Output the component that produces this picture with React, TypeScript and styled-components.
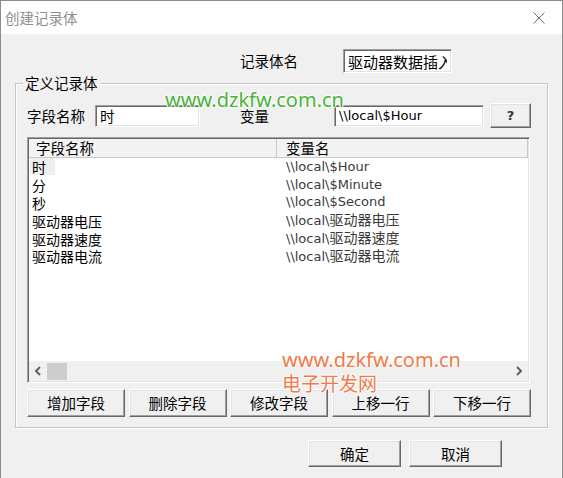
import styled, { createGlobalStyle } from 'styled-components';

const UI_FONT = `"Noto Sans CJK SC", "Noto Sans", sans-serif`;
const LATIN_FONT = `"DejaVu Sans", "Noto Sans CJK SC", sans-serif`;

const GlobalStyle = createGlobalStyle`
  html, body {
    margin: 0;
    padding: 0;
    background: #fff;
  }
  body {
    font-family: ${UI_FONT};
  }
  * {
    box-sizing: border-box;
  }
`;

const Window = styled.div`
  position: relative;
  width: 563px;
  height: 478px;
  display: flex;
  flex-direction: column;
  background: #f0f0f0;
  border: 1px solid #8c8c8c;
  border-bottom: none;
  overflow: hidden;
  color: #000;
`;

const TitleBar = styled.div`
  height: 33px;
  flex: none;
  display: flex;
  align-items: center;
  justify-content: space-between;
  padding-left: 4px;
  background: #fff;
`;

const Title = styled.span`
  font-size: 14.5px;
  line-height: 20px;
  color: #8f8f8f;
`;

const CloseBox = styled.div`
  width: 46px;
  height: 33px;
  display: flex;
  align-items: center;
  justify-content: center;
`;

const Body = styled.div`
  display: flex;
  flex-direction: column;
  padding: 0 14px;
`;

const NameRow = styled.div`
  display: flex;
  align-items: center;
  margin-top: 15px;
  padding-left: 225px;
`;

const Label = styled.span<{ $width: number; $gap?: number; $lead?: number }>`
  flex: none;
  width: ${(p) => p.$width}px;
  margin-left: ${(p) => p.$lead ?? 0}px;
  margin-right: ${(p) => p.$gap ?? 0}px;
  font-size: 14.5px;
  line-height: 16px;
  white-space: nowrap;
`;

const TextBox = styled.input<{ $width: number; $height: number; $latin?: boolean; $size?: number }>`
  flex: none;
  width: ${(p) => p.$width}px;
  height: ${(p) => p.$height}px;
  margin: 0;
  padding: 0 4px;
  background: #fff;
  border: 1px solid;
  border-color: #a0a0a0 #fff #fff #a0a0a0;
  box-shadow: inset 1px 1px 0 #696969, inset -1px -1px 0 #e3e3e3;
  font-family: ${(p) => (p.$latin ? LATIN_FONT : UI_FONT)};
  font-size: ${(p) => p.$size ?? (p.$latin ? 13 : 14.5)}px;
  color: #000;
  outline: none;
`;

const GroupBox = styled.fieldset`
  margin: 0;
  min-width: 0;
  padding: 10px 14px 10px 11px;
  border: 1px solid #c4c4c4;
  box-shadow: 1px 1px 0 #fff, inset 1px 1px 0 #fff;
`;

const Legend = styled.legend`
  margin-left: -4px;
  padding: 0 2px;
  font-size: 14.5px;
  line-height: 20px;
`;

const FieldRow = styled.div`
  display: flex;
  align-items: center;
  height: 25px;
`;

const Button = styled.button<{ $width: number; $height: number }>`
  flex: none;
  width: ${(p) => p.$width}px;
  height: ${(p) => p.$height}px;
  margin: 0;
  padding: 0;
  background: #f0f0f0;
  border: 1px solid;
  border-color: #fff #696969 #696969 #fff;
  box-shadow: inset -1px -1px 0 #a0a0a0, inset 1px 1px 0 #e3e3e3;
  font-family: ${UI_FONT};
  font-size: 14.5px;
  line-height: 20px;
  color: #000;
`;

const HelpButton = styled(Button)`
  margin-left: 6px;
  font-family: ${LATIN_FONT};
  font-size: 13px;
  font-weight: bold;
  color: #333;
`;

const ListView = styled.div`
  display: flex;
  flex-direction: column;
  width: 503px;
  height: 246px;
  margin-top: 9px;
  background: #fff;
  border: 1px solid;
  border-color: #a0a0a0 #fff #fff #a0a0a0;
  box-shadow: inset 1px 1px 0 #696969, inset -1px -1px 0 #e3e3e3;
  padding: 1px;
  overflow: hidden;
`;

const ListHeader = styled.div`
  flex: none;
  display: grid;
  grid-template-columns: 248px 1fr;
  height: 19px;
  background: #f3f3f3;
  border-bottom: 1px solid #c8c8c8;
`;

const HeaderCell = styled.div<{ $pad: number }>`
  padding-left: ${(p) => p.$pad}px;
  font-size: 14.5px;
  line-height: 18px;
  border-right: 1px solid #c8c8c8;
  white-space: nowrap;
`;

const Rows = styled.div`
  flex: 1;
  background: #fff;
`;

const Row = styled.div`
  display: grid;
  grid-template-columns: 248px 1fr;
  height: 17.8px;
  align-items: center;
`;

const NameCell = styled.div`
  padding-left: 1px;
  font-size: 14px;
  line-height: 16px;
  white-space: nowrap;
`;

const NameText = styled.span<{ $focused?: boolean }>`
  display: inline-block;
  padding: 1px ${(p) => (p.$focused ? 9 : 0)}px 0 2px;
  background: ${(p) => (p.$focused ? '#efefef' : 'transparent')};
`;

const VarCell = styled.div`
  padding-left: 9px;
  font-family: ${LATIN_FONT};
  font-size: 13px;
  line-height: 16px;
  color: #3a3a3a;
  white-space: nowrap;

  & .cjk {
    font-family: ${UI_FONT};
    font-size: 14px;
  }
`;

const HScroll = styled.div`
  flex: none;
  display: flex;
  align-items: center;
  height: 20px;
  background: #f0f0f0;
`;

const ArrowBox = styled.div`
  width: 18px;
  height: 20px;
  display: flex;
  align-items: center;
  justify-content: center;
`;

const Thumb = styled.div`
  width: 20px;
  height: 17px;
  background: #cdcdcd;
`;

const Track = styled.div`
  flex: 1;
`;

const ButtonRow = styled.div`
  display: flex;
  gap: 3.5px;
  margin-top: 6px;
`;

const ActionRow = styled.div`
  display: flex;
  gap: 8px;
  margin-top: 12px;
  padding-left: 293px;
`;

const Watermark = styled.div<{ $color: string; $size: number; $cjk?: boolean }>`
  position: absolute;
  font-family: ${(p) => (p.$cjk ? UI_FONT : `"Noto Sans", sans-serif`)};
  font-size: ${(p) => p.$size}px;
  line-height: 1;
  color: ${(p) => p.$color};
  white-space: nowrap;
  text-shadow: 1px 0 0 #fff, -1px 0 0 #fff, 0 1px 0 #fff, 0 -1px 0 #fff;
  pointer-events: none;
`;

const GreenMark = styled(Watermark)`
  left: 164px;
  top: 89px;
`;

const OrangeMarks = styled.div`
  position: absolute;
  left: 281px;
  top: 349px;
  display: flex;
  flex-direction: column;
  gap: 3px;
`;

const OrangeLine = styled(Watermark)`
  position: static;
`;

const fields: { name: string; rest: string; cjk: boolean }[] = [
  { name: '时', rest: '$Hour', cjk: false },
  { name: '分', rest: '$Minute', cjk: false },
  { name: '秒', rest: '$Second', cjk: false },
  { name: '驱动器电压', rest: '驱动器电压', cjk: true },
  { name: '驱动器速度', rest: '驱动器速度', cjk: true },
  { name: '驱动器电流', rest: '驱动器电流', cjk: true }
];

const VAR_PREFIX = '\\\\local\\';

const fieldButtons = ['增加字段', '删除字段', '修改字段', '上移一行', '下移一行'];

const Chevron = ({ dir }: { dir: 'left' | 'right' }) => (
  <svg width="8" height="10" viewBox="0 0 8 10">
    <polyline
      points={dir === 'left' ? '6,1 2,5 6,9' : '2,1 6,5 2,9'}
      fill="none"
      stroke="#606060"
      strokeWidth="2"
    />
  </svg>
);

const App = () => {
  return (
    <>
      <GlobalStyle />
      <Window>
        <TitleBar>
          <Title>创建记录体</Title>
          <CloseBox>
            <svg width="12" height="12" viewBox="0 0 12 12">
              <path d="M0.5 0.5 L11.5 11.5 M11.5 0.5 L0.5 11.5" stroke="#707070" strokeWidth="1" />
            </svg>
          </CloseBox>
        </TitleBar>

        <Body>
          <NameRow>
            <Label $width={55} $gap={48}>记录体名</Label>
            <TextBox $width={109} $height={24} $size={15} readOnly defaultValue="驱动器数据插入" />
          </NameRow>

          <GroupBox>
            <Legend>定义记录体</Legend>
            <FieldRow>
              <Label $width={58} $gap={10}>字段名称</Label>
              <TextBox $width={105} $height={22} readOnly defaultValue="时" />
              <Label $width={30} $gap={64} $lead={40}>变量</Label>
              <TextBox $width={150} $height={22} $latin readOnly defaultValue={'\\\\local\\$Hour'} />
              <HelpButton $width={41} $height={25}>?</HelpButton>
            </FieldRow>

            <ListView>
              <ListHeader>
                <HeaderCell $pad={7}>字段名称</HeaderCell>
                <HeaderCell $pad={9}>变量名</HeaderCell>
              </ListHeader>
              <Rows>
                {fields.map((f, i) => (
                  <Row key={f.name}>
                    <NameCell>
                      <NameText $focused={i === 0}>{f.name}</NameText>
                    </NameCell>
                    <VarCell>
                      {VAR_PREFIX}
                      {f.cjk ? <span className="cjk">{f.rest}</span> : f.rest}
                    </VarCell>
                  </Row>
                ))}
              </Rows>
              <HScroll>
                <ArrowBox>
                  <Chevron dir="left" />
                </ArrowBox>
                <Thumb />
                <Track />
                <ArrowBox>
                  <Chevron dir="right" />
                </ArrowBox>
              </HScroll>
            </ListView>

            <ButtonRow>
              {fieldButtons.map((b) => (
                <Button key={b} $width={98} $height={28}>
                  {b}
                </Button>
              ))}
            </ButtonRow>
          </GroupBox>

          <ActionRow>
            <Button $width={93} $height={27}>确定</Button>
            <Button $width={93} $height={27}>取消</Button>
          </ActionRow>
        </Body>

        <GreenMark $color="#4cb23c" $size={20}>www.dzkfw.com.cn</GreenMark>
        <OrangeMarks>
          <OrangeLine $color="#f07a48" $size={20}>www.dzkfw.com.cn</OrangeLine>
          <OrangeLine $color="#f07a48" $size={19} $cjk>电子开发网</OrangeLine>
        </OrangeMarks>
      </Window>
    </>
  );
};

export default App;
